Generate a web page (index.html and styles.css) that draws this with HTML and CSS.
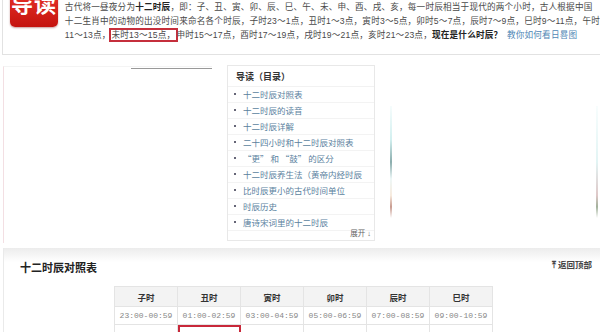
FILE: index.html
```html
<!DOCTYPE html>
<html lang="zh-CN">
<head>
    <meta charset="UTF-8">
    <title>十二时辰</title>
    <link rel="stylesheet" href="styles.css">
</head>
<body>
    <div class="intro">
        <div class="logo">导读</div>
        <div class="intro-text">
            <p>古代将一昼夜分为<b>十二时辰</b>，即：子、丑、寅、卯、辰、巳、午、未、申、酉、戌、亥，每一时辰相当于现代的两个小时，古人根据中国</p>
            <p>十二生肖中的动物的出没时间来命名各个时辰，子时23～1点，丑时1～3点，寅时3～5点，卯时5～7点，辰时7～9点，巳时9～11点，午时</p>
            <p>11～13点，<span class="mark">未时13～15点，</span>申时15～17点，酉时17～19点，戌时19～21点，亥时21～23点，<b>现在是什么时辰？</b> <a href="#">教你如何看日晷图</a></p>
        </div>
    </div>

    <div class="middle">
        <div class="pic-left"><div class="pic-top"></div></div>
        <div class="toc">
            <div class="toc-title">导读（目录）</div>
            <ul>
                <li>十二时辰对照表</li>
                <li>十二时辰的读音</li>
                <li>十二时辰详解</li>
                <li>二十四小时和十二时辰对照表</li>
                <li>“更” 和 “鼓” 的区分</li>
                <li>十二时辰养生法（黄帝内经时辰</li>
                <li>比时辰更小的古代时间单位</li>
                <li>时辰历史</li>
                <li>唐诗宋词里的十二时辰</li>
            </ul>
            <div class="toc-more">展开 ↓</div>
        </div>
        <div class="pic-right">
            <div class="edge edge-a"></div>
            <div class="edge edge-b"></div>
        </div>
    </div>

    <div class="section">
        <div class="section-head">
            <h2>十二时辰对照表</h2>
            <a class="back-top" href="#">⤒ 返回顶部</a>
        </div>
        <table class="hours">
            <tr><th>子时</th><th>丑时</th><th>寅时</th><th>卯时</th><th>辰时</th><th>巳时</th></tr>
            <tr><td>23:00-00:59</td><td>01:00-02:59</td><td>03:00-04:59</td><td>05:00-06:59</td><td>07:00-08:59</td><td>09:00-10:59</td></tr>
            <tr><td></td><td class="mark-cell"></td><td></td><td></td><td></td><td></td></tr>
        </table>
    </div>
</body>
</html>
```

FILE: styles.css
```css
body {
    margin: 0;
    font-family: "Liberation Sans", "Noto Sans CJK SC", sans-serif;
    color: #333;
    background: #fff;
    width: 600px;
    height: 332px;
    overflow: hidden;
}
p {
    margin: 0;
}
a {
    text-decoration: none;
}
.intro {
    display: flex;
    margin-left: 2px;
    height: 54px;
    border-left: 1px solid #e2e2e2;
    border-bottom: 1px solid #e2e2e2;
}
.logo {
    width: 51px;
    height: 37px;
    margin: -10px 0 0 7px;
    border-radius: 5px;
    background: linear-gradient(#e8342a, #c4120e);
    box-shadow: 0 1px 2px rgba(120, 0, 0, 0.4);
    color: #fff;
    font-size: 22px;
    font-weight: bold;
    line-height: 30px;
    text-align: center;
    letter-spacing: 1px;
}
.intro-text {
    padding: 0 0 0 7px;
    font-size: 8.6px;
    line-height: 14px;
    white-space: nowrap;
    color: #4a4a4a;
    letter-spacing: 0.2px;
}
.intro-text b {
    color: #222;
}
.intro-text a {
    color: #4f87b5;
    margin-left: 2px;
}
.mark {
    box-shadow: 0 0 0 2px #c52f3c;
    padding: 0 1px;
}
.middle {
    display: flex;
    margin-top: 11px;
    height: 178px;
}
.pic-left {
    width: 208px;
    height: 176px;
    margin-left: 3px;
    border-left: 1px solid #f3dfe3;
    border-top: 1px solid #f4f4f4;
}
.pic-top {
    margin-left: 127px;
    margin-top: 1px;
    height: 1px;
    background: #999;
}
.toc {
    position: relative;
    width: 146px;
    height: 174px;
    margin-left: 15px;
    margin-top: -1px;
    border: 1px solid #e8e8e8;
}
.toc-title {
    padding: 4px 0 0 8px;
    height: 16px;
    font-size: 9px;
    font-weight: bold;
    color: #333;
    border-bottom: 1px solid #f2f2f2;
}
.toc ul {
    list-style: none;
    margin: 0;
    padding: 0;
}
.toc li {
    height: 15px;
    line-height: 15px;
    border-bottom: 1px solid #f3f3f3;
    font-family: "Noto Sans CJK SC", sans-serif;
    font-size: 8.5px;
    color: #5a7f9e;
    padding-left: 15px;
    position: relative;
    white-space: nowrap;
    overflow: hidden;
}
.toc li::before {
    content: "";
    position: absolute;
    left: 6px;
    top: 6px;
    width: 2px;
    height: 2px;
    background: #667;
}
.toc-more {
    position: absolute;
    right: 3px;
    bottom: 2px;
    font-size: 7.5px;
    color: #666;
}
.pic-right {
    position: relative;
    flex: 1;
    margin-left: 10px;
}
.edge {
    position: absolute;
    width: 2px;
    opacity: 0.7;
}
.edge-a {
    left: 5px;
    top: 40px;
    height: 112px;
    background: linear-gradient(#f2fbfb, #bfe9e9 30%, #5a8a8a 50%, #e6f4f4 65%, #f4e2d0 80%, #b07060 90%, #fff);
}
.edge-b {
    right: 2px;
    top: 40px;
    height: 112px;
    background: linear-gradient(#f4fcfc, #d6f0f0 50%, #d0b0b0 80%, #7a9070 90%, #fff);
}
.section {
    margin-top: 4px;
    margin-left: 3px;
    border-left: 1px solid #eaeaea;
    background: linear-gradient(#ececec, #fff 14px);
}
.section-head {
    display: flex;
    justify-content: space-between;
    align-items: center;
    height: 34px;
    padding: 2px 8px 0 16px;
}
.section-head h2 {
    margin: 0;
    font-size: 11px;
    font-weight: bold;
    color: #222;
}
.back-top {
    font-size: 8.5px;
    font-weight: bold;
    color: #444;
    margin-top: -6px;
}
.hours {
    margin-left: 110px;
    margin-top: 2px;
    border-collapse: collapse;
    font-size: 8.5px;
}
.hours th, .hours td {
    width: 62px;
    border: 1px solid #e4e4e4;
    text-align: center;
    padding: 0;
}
.hours th {
    height: 19px;
    background: #f3f3f3;
    color: #333;
    font-weight: bold;
}
.hours td {
    height: 17px;
    color: #888;
    font-family: "Liberation Mono", monospace;
    font-size: 8px;
}
.hours .mark-cell {
    outline: 2px solid #c8283a;
    outline-offset: -2px;
}
```
